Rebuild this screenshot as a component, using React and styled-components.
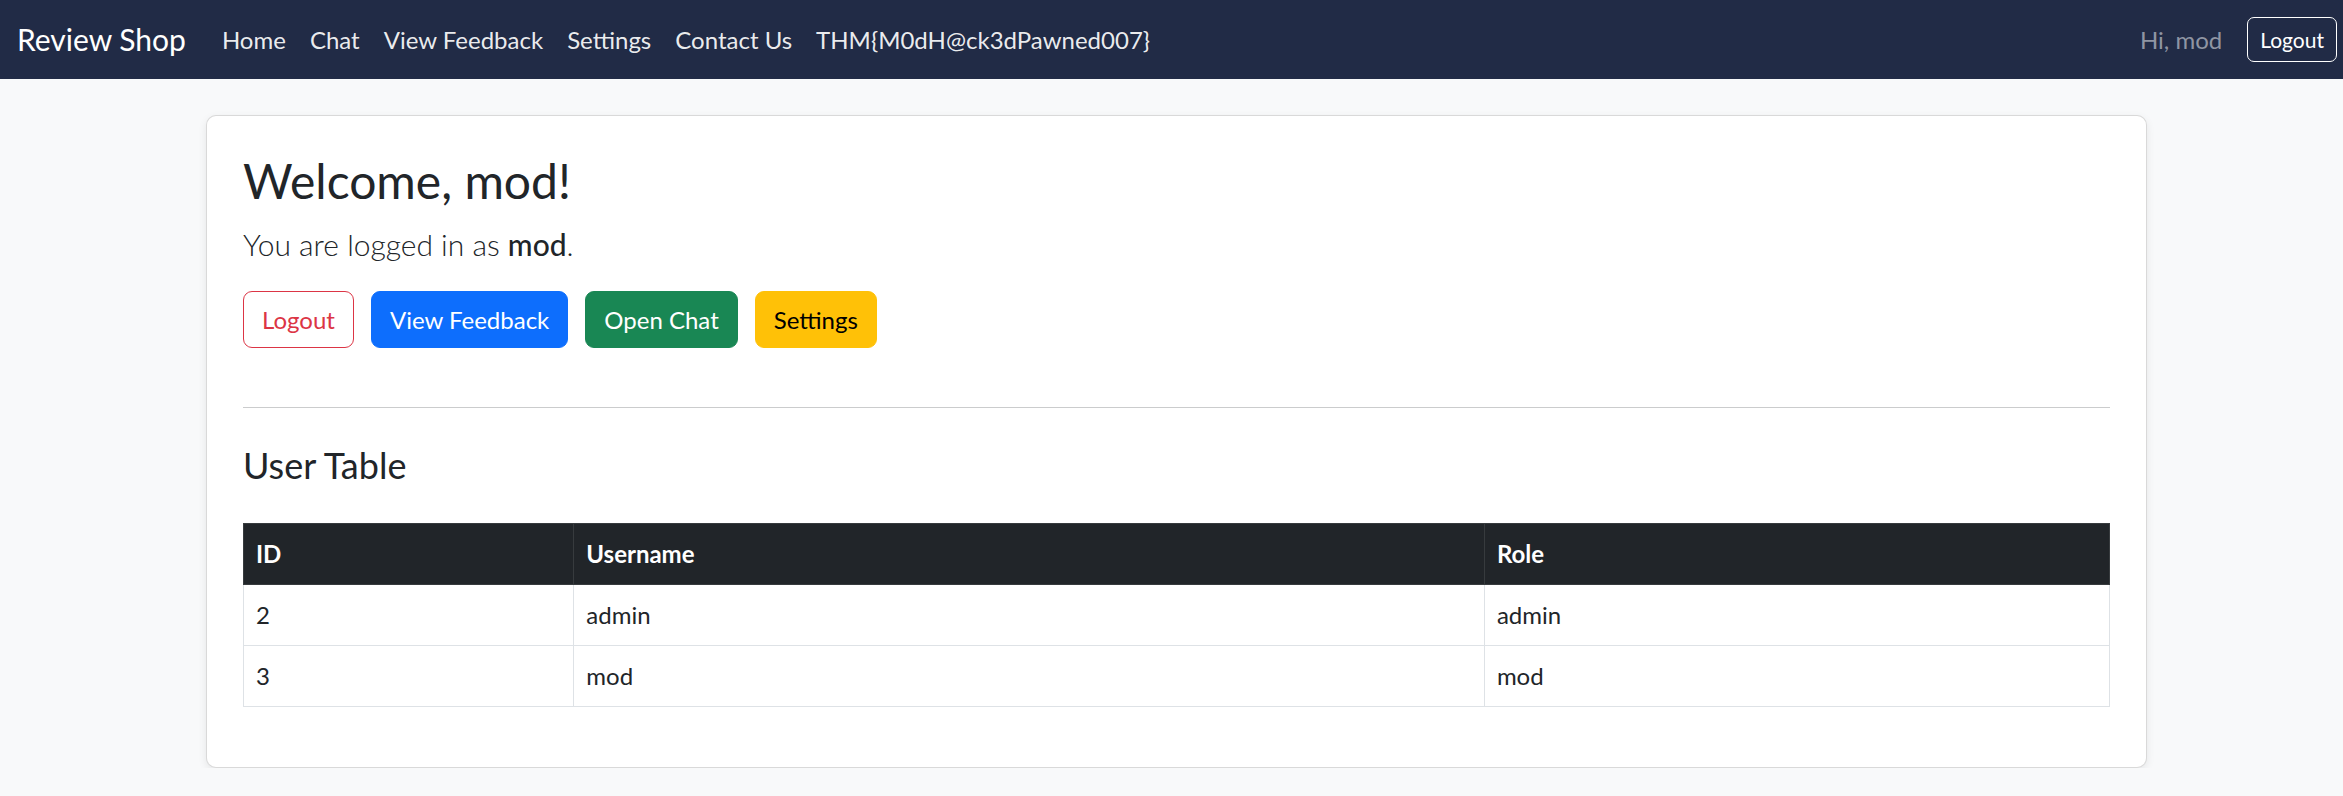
import React from "react";
import styled, { createGlobalStyle } from "styled-components";

const GlobalStyle = createGlobalStyle`
  * {
    box-sizing: border-box;
  }
  body {
    margin: 0;
    background: #f8f9fa;
    color: #212529;
    font-family: Lato, "Open Sans", "Noto Sans", sans-serif;
    font-size: 24px;
    line-height: 1.5;
  }
`;

const Navbar = styled.nav`
  height: 79px;
  background: #212b46;
  display: flex;
  align-items: center;
  padding: 0 6px 0 17px;
`;

const Brand = styled.a`
  color: #fff;
  font-size: 30px;
  margin-right: 24px;
  text-decoration: none;
`;

const NavList = styled.ul`
  display: flex;
  list-style: none;
  margin: 0;
  padding: 0;
`;

const NavLink = styled.a`
  display: block;
  padding: 0 12px;
  color: rgba(255, 255, 255, 0.92);
  text-decoration: none;
  font-size: 24px;
`;

const NavRight = styled.div`
  margin-left: auto;
  display: flex;
  align-items: center;
  gap: 25px;
`;

const Greeting = styled.span`
  color: #8f95a3;
  font-size: 24px;
`;

const OutlineSmall = styled.button`
  height: 45px;
  padding: 0 12px;
  background: transparent;
  border: 1px solid #fff;
  border-radius: 7px;
  color: #fff;
  font-family: inherit;
  font-size: 21px;
`;

const Main = styled.main`
  padding: 36px 196px 0 206px;
`;

const Card = styled.section`
  background: #fff;
  border: 1px solid rgba(0, 0, 0, 0.15);
  border-radius: 10px;
  box-shadow: 0 3px 8px rgba(0, 0, 0, 0.08);
  padding: 36px;
`;

const Title = styled.h2`
  font-size: 48px;
  font-weight: 400;
  line-height: 1.2;
  margin: 0 0 12px;
`;

const Lead = styled.p`
  font-size: 30px;
  font-weight: 300;
  margin: 0 0 24px;

  strong {
    font-weight: 500;
  }
`;

/* margin collapses with the rule's top margin */
const Actions = styled.div`
  display: flex;
  gap: 17px;
  margin-bottom: 59px;
`;

const tones = {
  danger: { bg: "#fff", border: "#dc3545", color: "#dc3545" },
  primary: { bg: "#0d6efd", border: "#0d6efd", color: "#fff" },
  success: { bg: "#198754", border: "#198754", color: "#fff" },
  warning: { bg: "#ffc107", border: "#ffc107", color: "#000" },
};

const Button = styled.button`
  height: 57px;
  padding: 0 18px;
  border-radius: 9px;
  font-family: inherit;
  font-size: 24px;
  background: ${(p) => tones[p.$tone].bg};
  border: 1px solid ${(p) => tones[p.$tone].border};
  color: ${(p) => tones[p.$tone].color};
`;

const Rule = styled.hr`
  border: 0;
  border-top: 1px solid #cbcccd;
  margin: 36px 0;
`;

const SubTitle = styled.h4`
  font-size: 36px;
  font-weight: 400;
  line-height: 1.2;
  margin: 0 0 36px;
`;

const Table = styled.table`
  width: 100%;
  border-collapse: collapse;
  margin-bottom: 24px;
`;

const Th = styled.th`
  width: ${(p) => p.$width || "auto"};
  background: #212529;
  color: #fff;
  font-weight: 700;
  text-align: left;
  padding: 12px;
  border: 1px solid #373b3e;
`;

const Td = styled.td`
  padding: 12px;
  border: 1px solid #dee2e6;
`;

const users = [
  { id: 2, username: "admin", role: "admin" },
  { id: 3, username: "mod", role: "mod" },
];

const App = () => {
  return (
    <>
      <GlobalStyle />
      <Navbar>
        <Brand href="#">Review Shop</Brand>
        <NavList>
          <li><NavLink href="#">Home</NavLink></li>
          <li><NavLink href="#">Chat</NavLink></li>
          <li><NavLink href="#">View Feedback</NavLink></li>
          <li><NavLink href="#">Settings</NavLink></li>
          <li><NavLink href="#">Contact Us</NavLink></li>
          <li><NavLink href="#">THM{"{"}M0dH@ck3dPawned007{"}"}</NavLink></li>
        </NavList>
        <NavRight>
          <Greeting>Hi, mod</Greeting>
          <OutlineSmall>Logout</OutlineSmall>
        </NavRight>
      </Navbar>
      <Main>
        <Card>
          <Title>Welcome, mod!</Title>
          <Lead>
            You are logged in as <strong>mod</strong>.
          </Lead>
          <Actions>
            <Button $tone="danger">Logout</Button>
            <Button $tone="primary">View Feedback</Button>
            <Button $tone="success">Open Chat</Button>
            <Button $tone="warning">Settings</Button>
          </Actions>
          <Rule />
          <SubTitle>User Table</SubTitle>
          <Table>
            <thead>
              <tr>
                <Th $width="17.7%">ID</Th>
                <Th $width="48.8%">Username</Th>
                <Th>Role</Th>
              </tr>
            </thead>
            <tbody>
              {users.map((u) => (
                <tr key={u.id}>
                  <Td>{u.id}</Td>
                  <Td>{u.username}</Td>
                  <Td>{u.role}</Td>
                </tr>
              ))}
            </tbody>
          </Table>
        </Card>
      </Main>
    </>
  );
};

export default App;
